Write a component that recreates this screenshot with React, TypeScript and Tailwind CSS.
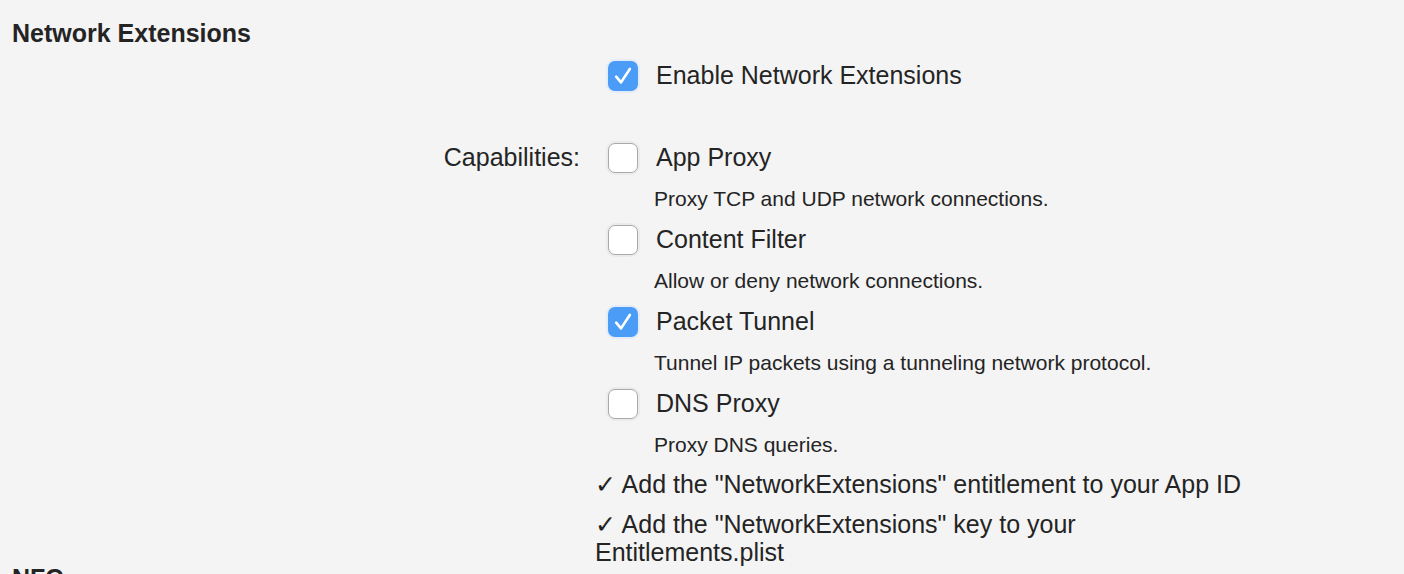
import React from 'react';

interface Capability {
  title: string;
  description: string;
  checked: boolean;
}

const CAPABILITIES: Capability[] = [
  { title: 'App Proxy', description: 'Proxy TCP and UDP network connections.', checked: false },
  { title: 'Content Filter', description: 'Allow or deny network connections.', checked: false },
  { title: 'Packet Tunnel', description: 'Tunnel IP packets using a tunneling network protocol.', checked: true },
  { title: 'DNS Proxy', description: 'Proxy DNS queries.', checked: false },
];

// macOS style checkbox
function CheckBox({ checked }: { checked: boolean }) {
  if (checked) {
    return (
      <span className="flex h-[30px] w-[30px] shrink-0 items-center justify-center rounded-[7px] bg-[#4a9cf7] shadow-[0_0_0_2px_#e3ecf8]">
        <svg width="22" height="22" viewBox="0 0 20 20" fill="none">
          <path
            d="M3.8 10.6 L8.2 15.8 L16.2 3.6"
            stroke="white"
            strokeWidth="2.4"
            strokeLinecap="round"
            strokeLinejoin="round"
          />
        </svg>
      </span>
    );
  }
  return (
    <span className="block h-[30px] w-[30px] shrink-0 rounded-[7px] border border-[#a9a9a9] bg-white shadow-[0_0_0_2px_#ebebeb]" />
  );
}

export default function App() {
  return (
    <div className="h-[574px] overflow-hidden bg-[#f4f4f4] font-['Liberation_Sans',sans-serif] text-[#242424]">
      {/* Section heading */}
      <h2 className="pl-[12px] pt-[18px] text-[25px] font-bold leading-[30px]">Network Extensions</h2>

      <div className="grid grid-cols-[595px_1fr]">
        {/* Enable row */}
        <div />
        <label className="ml-[13px] mt-[7px] flex h-[41px] items-center gap-[18px] text-[25px]">
          <CheckBox checked />
          <span>Enable Network Extensions</span>
        </label>

        {/* Capabilities */}
        <div className="mt-[41px] flex h-[41px] items-center justify-end pr-[15px] text-[25px]">
          Capabilities:
        </div>
        <div className="mt-[41px] flex flex-col">
          {CAPABILITIES.map((cap) => (
            <div key={cap.title}>
              <label className="ml-[13px] flex h-[41px] items-center gap-[18px] text-[25px]">
                <CheckBox checked={cap.checked} />
                <span>{cap.title}</span>
              </label>
              <div className="flex h-[41px] items-center pl-[59px] text-[21px]">{cap.description}</div>
            </div>
          ))}

          {/* Steps */}
          <div className="pt-[5px] text-[25px] leading-[28px]">
            <p>✓ Add the "NetworkExtensions" entitlement to your App ID</p>
            <p className="mt-[12px] w-[600px]">✓ Add the "NetworkExtensions" key to your Entitlements.plist</p>
          </div>
        </div>
      </div>

      {/* Next section, cut off by the window */}
      <h2 className="-mt-[3px] pl-[12px] text-[25px] font-bold leading-[30px]">NFC</h2>
    </div>
  );
}
